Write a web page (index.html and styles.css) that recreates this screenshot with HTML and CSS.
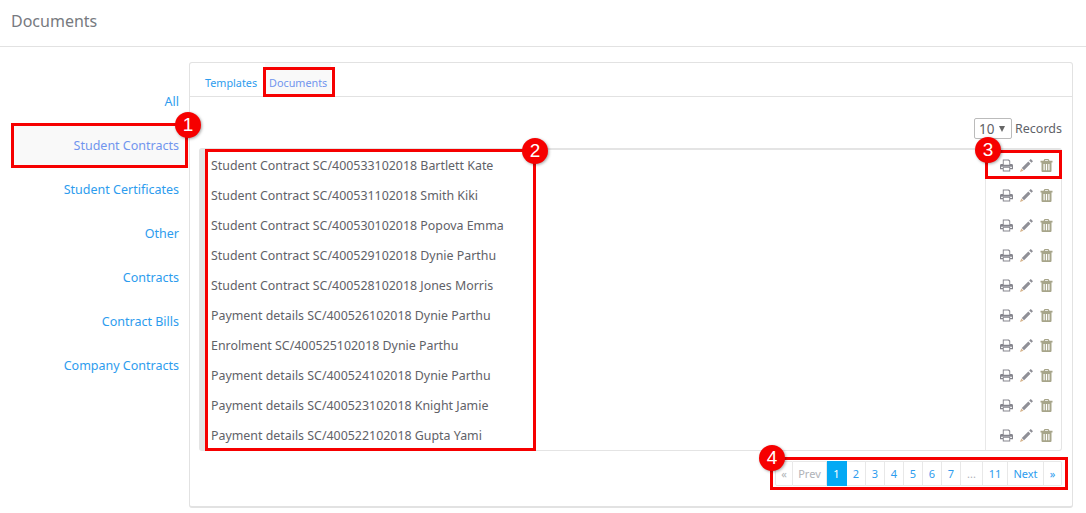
FILE: index.html
```html
<!DOCTYPE html>
<html lang="en">
<head>
<meta charset="utf-8">
<title>Documents</title>
<link rel="stylesheet" href="styles.css">
</head>
<body>
<svg class="defs" width="0" height="0" aria-hidden="true">
  <symbol id="i-print" viewBox="0 0 14 13">
    <path fill="currentColor" fill-rule="evenodd" d="M3 0h6.500L11 1.500V5h1.500A1.500 1.500 0 0 1 14 6.500V10.500h-3V13H3v-2.500H0V6.500A1.500 1.500 0 0 1 1.500 5H3zM4 1v4.800h6V2.200L8.800 1zM4 9v3h6V9zM1.200 7.800v1.400h1.800V8h8v1.200h1.800V7.800z"/>
  </symbol>
  <symbol id="i-pencil" viewBox="0 0 13 13">
    <path fill="currentColor" d="M10.800 0l2.200 2.200-1.600 1.600-2.200-2.200zM8.300 2.500l2.200 2.200-6.500 6.500-2.200-2.200z"/>
    <path fill="#d6b48c" d="M1.300 9.500l2.200 2.200-3.500 1.300z"/>
  </symbol>
  <symbol id="i-trash" viewBox="0 0 12 13">
    <path fill="currentColor" fill-rule="evenodd" d="M4 0h4l1 1.800h3v1.700H11V12a1 1 0 0 1-1 1H2a1 1 0 0 1-1-1V3.500H0V1.800h3zM4.700 1 4.400 1.800h3.200L7.300 1zM3 5v6.300h1.200V5zM5.400 5v6.300h1.200V5zM7.800 5v6.300H9V5z"/>
  </symbol>
</svg>
<header class="page-head"><h1>Documents</h1></header>
<main class="layout">
  <nav class="side">
    <a href="#">All</a>
    <a href="#" class="on">Student Contracts</a>
    <a href="#">Student Certificates</a>
    <a href="#">Other</a>
    <a href="#">Contracts</a>
    <a href="#">Contract Bills</a>
    <a href="#">Company Contracts</a>
  </nav>
  <section class="panel">
    <div class="tabs">
      <a href="#">Templates</a>
      <a href="#" class="on">Documents</a>
    </div>
    <div class="body">
      <div class="records">
        <span class="select">10 <i></i></span>
        <span>Records</span>
      </div>
      <div class="table">
        <div class="row"><span class="name">Student Contract SC/400533102018 Bartlett Kate</span><span class="acts"><svg class="i p"><use href="#i-print"/></svg><svg class="i e"><use href="#i-pencil"/></svg><svg class="i t"><use href="#i-trash"/></svg></span></div>
        <div class="row"><span class="name">Student Contract SC/400531102018 Smith Kiki</span><span class="acts"><svg class="i p"><use href="#i-print"/></svg><svg class="i e"><use href="#i-pencil"/></svg><svg class="i t"><use href="#i-trash"/></svg></span></div>
        <div class="row"><span class="name">Student Contract SC/400530102018 Popova Emma</span><span class="acts"><svg class="i p"><use href="#i-print"/></svg><svg class="i e"><use href="#i-pencil"/></svg><svg class="i t"><use href="#i-trash"/></svg></span></div>
        <div class="row"><span class="name">Student Contract SC/400529102018 Dynie Parthu</span><span class="acts"><svg class="i p"><use href="#i-print"/></svg><svg class="i e"><use href="#i-pencil"/></svg><svg class="i t"><use href="#i-trash"/></svg></span></div>
        <div class="row"><span class="name">Student Contract SC/400528102018 Jones Morris</span><span class="acts"><svg class="i p"><use href="#i-print"/></svg><svg class="i e"><use href="#i-pencil"/></svg><svg class="i t"><use href="#i-trash"/></svg></span></div>
        <div class="row"><span class="name">Payment details SC/400526102018 Dynie Parthu</span><span class="acts"><svg class="i p"><use href="#i-print"/></svg><svg class="i e"><use href="#i-pencil"/></svg><svg class="i t"><use href="#i-trash"/></svg></span></div>
        <div class="row"><span class="name">Enrolment SC/400525102018 Dynie Parthu</span><span class="acts"><svg class="i p"><use href="#i-print"/></svg><svg class="i e"><use href="#i-pencil"/></svg><svg class="i t"><use href="#i-trash"/></svg></span></div>
        <div class="row"><span class="name">Payment details SC/400524102018 Dynie Parthu</span><span class="acts"><svg class="i p"><use href="#i-print"/></svg><svg class="i e"><use href="#i-pencil"/></svg><svg class="i t"><use href="#i-trash"/></svg></span></div>
        <div class="row"><span class="name">Payment details SC/400523102018 Knight Jamie</span><span class="acts"><svg class="i p"><use href="#i-print"/></svg><svg class="i e"><use href="#i-pencil"/></svg><svg class="i t"><use href="#i-trash"/></svg></span></div>
        <div class="row"><span class="name">Payment details SC/400522102018 Gupta Yami</span><span class="acts"><svg class="i p"><use href="#i-print"/></svg><svg class="i e"><use href="#i-pencil"/></svg><svg class="i t"><use href="#i-trash"/></svg></span></div>
      </div>
      <div class="pager">
        <a class="off wide-s">«</a><a class="off prev">Prev</a><a class="cur">1</a><a>2</a><a>3</a><a>4</a><a>5</a><a>6</a><a>7</a><a class="off dots">...</a><a class="eleven">11</a><a class="next">Next</a><a class="wide-s">»</a>
      </div>
    </div>
  </section>
</main>
<div class="mark m1"></div><div class="mark m2"></div><div class="mark m3"></div><div class="mark m4"></div><div class="mark m5"></div>
<b class="badge b1">1</b><b class="badge b2">2</b><b class="badge b3">3</b><b class="badge b4">4</b>
</body>
</html>
```
FILE: styles.css
```css
* { box-sizing: border-box; }
html, body { margin: 0; }
body {
  position: relative;
  width: 1086px;
  height: 513px;
  overflow: hidden;
  background: #fff;
  font-family: "Noto Sans", "Open Sans", sans-serif;
  font-size: 12px;
  color: #5f6268;
}
a { color: #2d9cee; text-decoration: none; }
.defs { position: absolute; }
.page-head {
  height: 47px;
  padding-left: 11px;
  border-bottom: 1px solid #e2e2e2;
}
.page-head h1 {
  margin: 0;
  font-size: 16px;
  line-height: 42px;
  font-weight: 400;
  color: #777a80;
}
.layout { display: flex; align-items: flex-start; padding-top: 15px; }
.side {
  width: 189px;
  padding: 18px 0 0 14px;
  display: flex;
  flex-direction: column;
}
.side a {
  height: 44px;
  line-height: 44px;
  padding-right: 10px;
  text-align: right;
  font-size: 12.500px;
}
.side a.on { background: #f9f9f9; color: #7195ee; }
.panel {
  width: 884px;
  height: 446px;
  border: 1px solid #e2e2e2;
  border-bottom-width: 2px;
  border-radius: 3px;
}
.tabs {
  height: 34px;
  display: flex;
  align-items: stretch;
  padding-left: 11px;
  border-bottom: 1px solid #e2e2e2;
}
.tabs a {
  line-height: 40px;
  padding: 0 4px;
  margin-right: 4px;
  font-size: 10.800px;
}
.tabs a.on { background: #f9f9f9; color: #7195ee; }
.body { padding: 21px 10px 0 9px; }
.records {
  display: flex;
  justify-content: flex-end;
  align-items: center;
  gap: 3px;
  height: 21px;
  font-size: 12.500px;
}
.select {
  width: 38px;
  height: 21px;
  display: flex;
  align-items: center;
  gap: 5px;
  padding-left: 4px;
  border: 1px solid #bbb;
  border-radius: 2px;
  font-size: 13.500px;
}
.select i {
  width: 0;
  height: 0;
  border: 3.500px solid transparent;
  border-top: 6px solid #666;
  border-bottom: 0;
}
.table {
  margin-top: 9px;
  height: 303px;
  border: 1px solid #e4e4e4;
  border-left-width: 6px;
  border-top-width: 2px;
  border-radius: 3px;
}
.row { display: flex; height: 30px; align-items: center; }
.name { flex: 1; font-size: 12.400px; padding-left: 6px; }
.acts {
  width: 76px;
  height: 30px;
  display: flex;
  align-items: center;
  gap: 7px;
  padding-left: 14px;
  border-left: 1px solid #e8e8e8;
}
.i { display: block; flex: none; width: 13px; height: 13px; }
.i.p { color: #85858d; }
.i.e { color: #8f8f96; }
.i.t { color: #a7a58a; }
.pager {
  display: flex;
  justify-content: flex-end;
  margin-top: 10px;
  height: 25px;
}
.pager a {
  height: 25px;
  width: 19px;
  line-height: 24px;
  text-align: center;
  font-size: 11px;
  border: 1px solid #e8e8e8;
  border-left-width: 0;
}
.pager a:first-child { border-left-width: 1px; border-radius: 2px 0 0 2px; width: 18px; }
.pager a:last-child { border-radius: 0 2px 2px 0; width: 18px; }
.pager a.off { color: #b0b3b8; }
.pager a.prev { width: 34px; }
.pager a.cur { width: 20px; background: #03a9f4; border-color: #03a9f4; color: #fff; }
.pager a.dots { width: 22px; }
.pager a.eleven { width: 25px; }
.pager a.next { width: 36px; }
.mark {
  position: absolute;
  border: 3px solid #f60000;
}
.m1 { left: 11px; top: 123px; width: 177px; height: 45px; }
.m2 { left: 263px; top: 67px; width: 72px; height: 30px; }
.m3 { left: 205px; top: 149px; width: 331px; height: 302px; }
.m4 { left: 985px; top: 150px; width: 77px; height: 29px; }
.m5 { left: 770px; top: 457px; width: 298px; height: 33px; }
.badge {
  position: absolute;
  width: 26px;
  height: 26px;
  border-radius: 50%;
  background: #f60000;
  color: #fff;
  font: 400 19px/26px "Liberation Sans", sans-serif;
  text-align: center;
  box-shadow: 1px 1px 3px rgba(0,0,0,.35);
}
.b1 { left: 175px; top: 112px; }
.b2 { left: 522px; top: 138px; }
.b3 { left: 975px; top: 137px; }
.b4 { left: 759px; top: 445px; }
```
